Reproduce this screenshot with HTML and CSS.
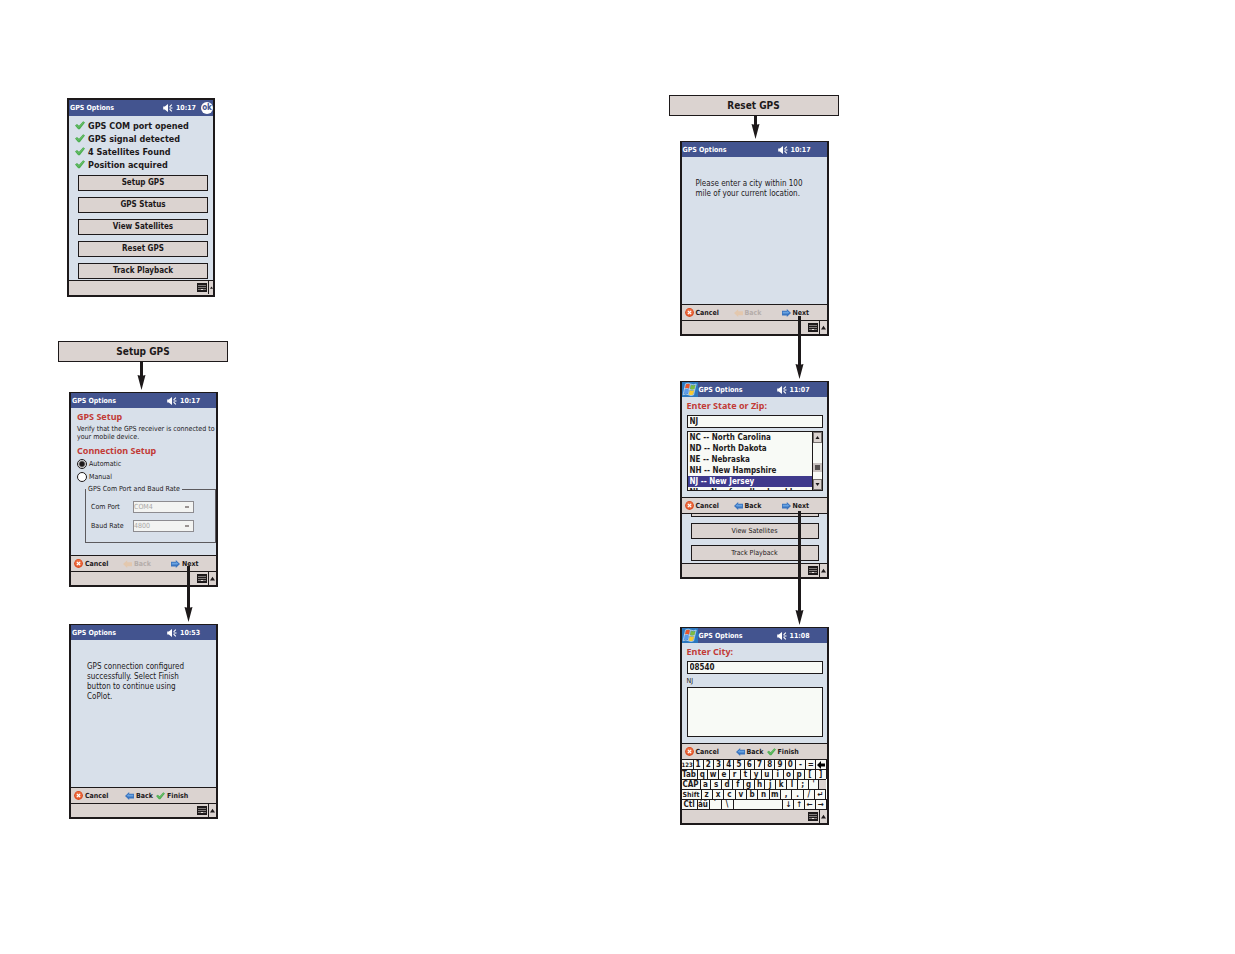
FILE: index.html
```html
<!DOCTYPE html>
<html lang="en">
<head>
    <meta charset="UTF-8">
    <meta name="viewport" content="width=device-width, initial-scale=1.0">
    <title>GPS Options</title>
    <link rel="stylesheet" href="styles.css">
</head>
<body>
    <!-- shared icons -->
    <svg class="sprite" aria-hidden="true">
        <symbol id="check" viewBox="0 0 10 9">
            <path d="M0 4.6 L2 3 L4 4.8 L8.2 0.2 L10 1.6 L4.8 8.2 L3.2 8.2 Z" fill="#4cae50"/>
            <path d="M1.4 4.4 L4 6.4 L8.6 1.4" fill="none" stroke="#6cc06c" stroke-width="1"/>
        </symbol>
        <symbol id="speaker" viewBox="0 0 12 10">
            <path d="M0 3 H2 L6 0 V10 L2 7 H0 Z" fill="#fff"/>
            <path d="M8 3.6 L10.8 0.8 M8 5 H11.6 M8 6.4 L10.8 9.2" fill="none" stroke="#fff" stroke-width="1.4"/>
        </symbol>
        <symbol id="cancel" viewBox="0 0 10 10">
            <circle cx="5" cy="5" r="4.9" fill="#d9481f"/>
            <circle cx="5" cy="4.6" r="3.8" fill="#ec6a3c"/>
            <path d="M3.2 3.2 L6.8 6.8 M6.8 3.2 L3.2 6.8" stroke="#fff" stroke-width="1.5"/>
        </symbol>
        <symbol id="arrow-left" viewBox="0 0 9 8">
            <path d="M0 4 L4.2 0 V1.8 H9 V6.4 H4.2 V8 Z" fill="#3a74bf"/>
            <path d="M1.6 3.8 L4 2 V2.8 H8.2 V4.6 H3 Z" fill="#69a3e2"/>
        </symbol>
        <symbol id="arrow-right" viewBox="0 0 9 8">
            <path d="M9 4 L4.8 0 V1.8 H0 V6.4 H4.8 V8 Z" fill="#3a74bf"/>
            <path d="M7.4 3.8 L5 2 V2.8 H0.8 V4.6 H6 Z" fill="#69a3e2"/>
        </symbol>
        <symbol id="arrow-off" viewBox="0 0 9 8">
            <path d="M0 4 L4.2 0.3 V2.2 H9 V6.2 H4.2 V8 Z" fill="#e3c8ae"/>
        </symbol>
        <symbol id="keyboard" viewBox="0 0 10 9">
            <rect x="0" y="0" width="10" height="9" fill="#1d191a"/>
            <path d="M1.5 2.5 H8.5 M1.5 4.5 H8.5" stroke="#e4dedb" stroke-width="1" stroke-dasharray="1 1"/>
            <path d="M1.5 6.5 H8.5" stroke="#e4dedb" stroke-width="1" stroke-dasharray="1 1 3 1"/>
        </symbol>
        <symbol id="up" viewBox="0 0 4 3"><path d="M0 3 L2 0 L4 3 Z" fill="#1d191a"/></symbol>
        <symbol id="down" viewBox="0 0 4 3"><path d="M0 0 L2 3 L4 0 Z" fill="#1d191a"/></symbol>
        <symbol id="windows" viewBox="0 0 16 16">
            <path d="M3.6 2.6 Q6 1.2 8 2.6 L7 7 Q5 5.8 2.4 7 Z" fill="#e8552b"/>
            <path d="M9 3 Q11.4 4.4 14 3 L12.8 7.6 Q10.4 8.8 8 7.4 Z" fill="#7dbb42"/>
            <path d="M2.2 8 Q4.8 6.8 6.8 8 L5.8 12.6 Q3.6 11.4 1 12.8 Z" fill="#5c9bea"/>
            <path d="M7.8 8.6 Q10.2 9.8 12.6 8.6 L11.4 13.2 Q9 14.6 6.6 13.2 Z" fill="#f7c92f"/>
            <path d="M3.2 2 Q6.2 0.4 8.6 2.2 Q11.4 3.6 14.6 2.2 L11.8 13.8 Q9 15.2 6.2 13.6 Q3.6 12 0.6 13.6 Z M1.8 7.4 Q5 6 7.4 7.8 Q10.2 9.2 13 8 M8.4 2.4 L6.2 13.4" fill="none" stroke="#fff" stroke-width="0.6"/>
        </symbol>
        <symbol id="flow-arrow" viewBox="0 0 9 16">
            <path d="M0.5 1 Q4.5 2.4 8.5 1 L4.5 16 Z" fill="#1d191a"/>
        </symbol>
    </svg>

    <main class="page">
        <section class="column">
            <div class="phone phone-status">
                <header class="titlebar">
                    <h2>GPS Options</h2>
                    <svg class="speaker"><use href="#speaker"/></svg>
                    <time>10:17</time>
                    <button class="ok">ok</button>
                </header>
                <ul class="status">
                    <li><svg><use href="#check"/></svg>GPS COM port opened</li>
                    <li><svg><use href="#check"/></svg>GPS signal detected</li>
                    <li><svg><use href="#check"/></svg>4 Satellites Found</li>
                    <li><svg><use href="#check"/></svg>Position acquired</li>
                </ul>
                <nav class="options">
                    <button>Setup GPS</button>
                    <button>GPS Status</button>
                    <button>View Satellites</button>
                    <button>Reset GPS</button>
                    <button>Track Playback</button>
                </nav>
                <footer class="tray">
                    <svg class="keys"><use href="#keyboard"/></svg>
                    <svg class="up"><use href="#up"/></svg>
                </footer>
            </div>

            <button class="banner banner-setup">Setup GPS</button>
            <div class="flow flow-setup"><svg><use href="#flow-arrow"/></svg></div>

            <div class="phone">
                <header class="titlebar">
                    <h2>GPS Options</h2>
                    <svg class="speaker"><use href="#speaker"/></svg>
                    <time>10:17</time>
                </header>
                <form class="setup">
                    <h3>GPS Setup</h3>
                    <p>Verify that the GPS receiver is connected to your mobile device.</p>
                    <h3>Connection Setup</h3>
                    <label class="radio"><input type="radio" name="mode" checked>Automatic</label>
                    <label class="radio"><input type="radio" name="mode">Manual</label>
                    <fieldset>
                        <legend>GPS Com Port and Baud Rate</legend>
                        <label for="port">Com Port</label>
                        <select id="port" disabled><option>COM4</option></select>
                        <label for="baud">Baud Rate</label>
                        <select id="baud" disabled><option>4800</option></select>
                    </fieldset>
                </form>
                <div class="commands">
                    <button><svg class="round"><use href="#cancel"/></svg>Cancel</button>
                    <button disabled><svg><use href="#arrow-off"/></svg>Back</button>
                    <button><svg><use href="#arrow-right"/></svg>Next</button>
                </div>
                <footer class="tray">
                    <svg class="keys"><use href="#keyboard"/></svg>
                    <svg class="up"><use href="#up"/></svg>
                </footer>
            </div>
            <div class="flow flow-next"><svg><use href="#flow-arrow"/></svg></div>

            <div class="phone">
                <header class="titlebar">
                    <h2>GPS Options</h2>
                    <svg class="speaker"><use href="#speaker"/></svg>
                    <time>10:53</time>
                </header>
                <p class="message message-done">GPS connection configured successfully. Select Finish button to continue using CoPlot.</p>
                <div class="commands commands-finish">
                    <button><svg class="round"><use href="#cancel"/></svg>Cancel</button>
                    <button><svg><use href="#arrow-left"/></svg>Back</button>
                    <button><svg><use href="#check"/></svg>Finish</button>
                </div>
                <footer class="tray">
                    <svg class="keys"><use href="#keyboard"/></svg>
                    <svg class="up"><use href="#up"/></svg>
                </footer>
            </div>
        </section>

        <section class="column column-reset">
            <button class="banner">Reset GPS</button>
            <div class="flow flow-reset"><svg><use href="#flow-arrow"/></svg></div>

            <div class="phone">
                <header class="titlebar">
                    <h2>GPS Options</h2>
                    <svg class="speaker"><use href="#speaker"/></svg>
                    <time>10:17</time>
                </header>
                <p class="message">Please enter a city within 100 mile of your current location.</p>
                <div class="commands">
                    <button><svg class="round"><use href="#cancel"/></svg>Cancel</button>
                    <button disabled><svg><use href="#arrow-off"/></svg>Back</button>
                    <button><svg><use href="#arrow-right"/></svg>Next</button>
                </div>
                <footer class="tray">
                    <svg class="keys"><use href="#keyboard"/></svg>
                    <svg class="up"><use href="#up"/></svg>
                </footer>
            </div>
            <div class="flow flow-state"><svg><use href="#flow-arrow"/></svg></div>

            <div class="phone">
                <header class="titlebar titlebar-start">
                    <svg class="start"><use href="#windows"/></svg>
                    <h2>GPS Options</h2>
                    <svg class="speaker"><use href="#speaker"/></svg>
                    <time>11:07</time>
                </header>
                <form class="search">
                    <label class="heading" for="state">Enter State or Zip:</label>
                    <input id="state" type="text" value="NJ">
                    <div class="listbox">
                        <ul aria-label="States">
                            <li>NC -- North Carolina</li>
                            <li>ND -- North Dakota</li>
                            <li>NE -- Nebraska</li>
                            <li>NH -- New Hampshire</li>
                            <li class="selected">NJ -- New Jersey</li>
                            <li>NL -- Newfoundland and L</li>
                        </ul>
                        <div class="scrollbar">
                            <button type="button" aria-label="Scroll up"><svg><use href="#up"/></svg></button>
                            <span class="thumb"></span>
                            <button type="button" aria-label="Scroll down"><svg><use href="#down"/></svg></button>
                        </div>
                    </div>
                </form>
                <div class="commands">
                    <button><svg class="round"><use href="#cancel"/></svg>Cancel</button>
                    <button><svg><use href="#arrow-left"/></svg>Back</button>
                    <button><svg><use href="#arrow-right"/></svg>Next</button>
                </div>
                <nav class="options options-behind">
                    <span class="covered"></span>
                    <button>View Satellites</button>
                    <button>Track Playback</button>
                </nav>
                <footer class="tray">
                    <svg class="keys"><use href="#keyboard"/></svg>
                    <svg class="up"><use href="#up"/></svg>
                </footer>
            </div>
            <div class="flow flow-city"><svg><use href="#flow-arrow"/></svg></div>

            <div class="phone">
                <header class="titlebar titlebar-start">
                    <svg class="start"><use href="#windows"/></svg>
                    <h2>GPS Options</h2>
                    <svg class="speaker"><use href="#speaker"/></svg>
                    <time>11:08</time>
                </header>
                <form class="search">
                    <label class="heading" for="city">Enter City:</label>
                    <input id="city" type="text" value="08540">
                    <label class="region" for="matches">NJ</label>
                    <textarea id="matches"></textarea>
                </form>
                <div class="commands commands-finish">
                    <button><svg class="round"><use href="#cancel"/></svg>Cancel</button>
                    <button><svg><use href="#arrow-left"/></svg>Back</button>
                    <button><svg><use href="#check"/></svg>Finish</button>
                </div>
                <div class="keyboard">
                    <div class="row"><button class="k12 small">123</button><button>1</button><button>2</button><button>3</button><button>4</button><button>5</button><button>6</button><button>7</button><button>8</button><button>9</button><button>0</button><button>-</button><button>=</button><button aria-label="Backspace"><svg><path d="M0 4 L4 0 V2.5 H8 V5.5 H4 V8 Z"/></svg></button></div>
                    <div class="row"><button class="k16">Tab</button><button>q</button><button>w</button><button>e</button><button>r</button><button>t</button><button>y</button><button>u</button><button>i</button><button>o</button><button>p</button><button>[</button><button>]</button></div>
                    <div class="row"><button class="k19">CAP</button><button>a</button><button>s</button><button>d</button><button>f</button><button>g</button><button>h</button><button>j</button><button>k</button><button>l</button><button>;</button><button>'</button><span class="blank"></span></div>
                    <div class="row"><button class="k20">Shift</button><button>z</button><button>x</button><button>c</button><button>v</button><button>b</button><button>n</button><button>m</button><button>,</button><button>.</button><button>/</button><button>↵</button></div>
                    <div class="row"><button class="k16">Ctl</button><button class="k12">áü</button><button class="k12">`</button><button class="k12">\</button><button class="space" aria-label="Space"></button><button>↓</button><button>↑</button><button>←</button><button>→</button></div>
                </div>
                <footer class="tray">
                    <svg class="keys"><use href="#keyboard"/></svg>
                    <svg class="up"><use href="#up"/></svg>
                </footer>
            </div>
        </section>
    </main>
</body>
</html>
```
FILE: styles.css
```css
* {
    box-sizing: border-box;
}
body {
    margin: 0;
    background: white;
    color: #1d191a;
    font-family: "DejaVu Sans Condensed", "DejaVu Sans", sans-serif;
    font-size: 8px;
    line-height: 10px;
}
h2, h3, p, ul {
    margin: 0;
    padding: 0;
    list-style: none;
}
button, input, select, textarea {
    margin: 0;
    padding: 0;
    border: 0;
    border-radius: 0;
    background: none;
    color: inherit;
    font: inherit;
}
svg {
    display: block;
    flex: none;
}
.sprite {
    position: absolute;
    width: 0;
    height: 0;
}
.page {
    display: grid;
    grid-template-columns: 1fr 1fr;
}
.column {
    display: flex;
    flex-direction: column;
    align-items: flex-start;
    padding: 98px 0 0 58px;
}
.column-reset {
    padding: 95px 0 0 51px;
}

/* device screens */
.phone {
    display: flex;
    flex-direction: column;
    width: 149px;
    min-height: 195px;
    margin-left: 11px;
    border: solid #1d191a;
    border-width: 1px 2px 2px;
    background: #d8e0ea;
    overflow: hidden;
}
.phone-status {
    width: 148px;
    min-height: 199px;
    margin-left: 9px;
    border-top-width: 2px;
}
.titlebar {
    display: flex;
    align-items: center;
    height: 15px;
    padding-left: 1px;
    background: #43548f;
    color: white;
    font-size: 7px;
    font-weight: bold;
}
.phone-status .titlebar {
    height: 16px;
}
.titlebar h2 {
    width: 95px;
    font-size: 7px;
}
.titlebar-start {
    padding-left: 0;
}
.titlebar-start h2 {
    width: 78px;
    margin-left: 1px;
}
.start {
    width: 16px;
    height: 15px;
    background: #2b78c0;
}
.speaker {
    width: 10px;
    height: 8px;
    margin-right: 3px;
}
.ok {
    flex: none;
    width: 12px;
    height: 12px;
    margin-left: 5px;
    border-radius: 50%;
    background: white;
    color: #43548f;
    font-size: 8px;
    line-height: 10px;
}
.tray {
    display: flex;
    justify-content: flex-end;
    height: 14px;
    border-top: 1px solid #1d191a;
    background: #dbd3d0;
}
.tray .keys {
    width: 10px;
    height: 9px;
    margin: 2px 1px 0 0;
}
.tray .up {
    width: 8px;
    height: 13px;
    padding: 0 1px;
    border-left: 1px solid #1d191a;
}
.phone-status .tray {
    height: 15px;
}
.phone-status .up {
    width: 5px;
    padding-right: 0;
}

/* status list and option buttons */
.status {
    padding: 3px 0 0 6px;
    font-size: 9px;
    font-weight: bold;
}
.status li {
    display: flex;
    align-items: center;
    gap: 3px;
    height: 13px;
    white-space: nowrap;
}
.status svg {
    width: 10px;
    height: 9px;
}
.options {
    display: flex;
    flex: 1;
    flex-direction: column;
    gap: 6px;
    padding: 4px 5px 0 9px;
}
.options button {
    height: 16px;
    border: 1px solid #1d191a;
    background: #dbd3d0;
    font-weight: bold;
}
.options-behind {
    padding: 0 8px 2px 9px;
    border-top: 1px solid #1d191a;
}
.options-behind button {
    font-size: 7px;
    font-weight: normal;
}
.covered {
    height: 3px;
    border: solid #1d191a;
    border-width: 0 1px 1px;
    background: #dbd3d0;
}

/* flow chart labels and arrows */
.banner {
    width: 170px;
    height: 21px;
    border: 1px solid #1d191a;
    background: #dbd3d0;
    font-size: 10px;
    font-weight: bold;
}
.banner-setup {
    margin-top: 44px;
}
.flow {
    position: relative;
    z-index: 1;
    width: 9px;
    background: linear-gradient(#1d191a, #1d191a) center top / 3px calc(100% - 12px) no-repeat;
}
.flow svg {
    position: absolute;
    bottom: 0;
    width: 9px;
    height: 16px;
}
.flow-setup {
    height: 28px;
    margin: 0 0 2px 79px;
}
.flow-next {
    height: 56px;
    margin: -21px 0 2px 126px;
}
.flow-reset {
    height: 23px;
    margin: 0 0 2px 82px;
}
.flow-state {
    height: 63px;
    margin: -20px 0 2px 126px;
}
.flow-city {
    height: 114px;
    margin: -68px 0 2px 126px;
}

/* bottom commands */
.commands {
    display: grid;
    grid-template-columns: 49px 48px 1fr;
    height: 16px;
    padding-left: 3px;
    border-top: 1px solid #1d191a;
    background: #dbd3d0;
}
.commands-finish {
    grid-template-columns: 51px 31px 1fr;
}
.commands button {
    display: flex;
    align-items: center;
    gap: 2px;
    font-size: 7px;
    font-weight: bold;
}
.commands button:disabled {
    color: #b5adaa;
}
.commands svg {
    width: 9px;
    height: 8px;
}
.commands .round {
    width: 9px;
    height: 9px;
}

/* gps setup form */
.setup {
    flex: 1;
    padding: 3px 0 0 6px;
    font-size: 7px;
    line-height: 8px;
}
.setup h3, .heading {
    color: #c23b36;
    font-family: "Noto Sans", sans-serif;
    font-size: 9px;
    font-weight: bold;
    line-height: 12px;
}
.setup p {
    margin: 2px 0 4px;
}
.radio {
    display: flex;
    align-items: center;
    gap: 2px;
    height: 13px;
}
.radio input {
    appearance: none;
    width: 10px;
    height: 10px;
    border: 1px solid #1d191a;
    border-radius: 50%;
    background: white;
}
.radio input:checked {
    background: radial-gradient(#1d191a 2px, white 4px);
}
fieldset {
    display: grid;
    grid-template-columns: 42px 61px;
    align-items: center;
    row-gap: 7px;
    margin: 2px 0 0 8px;
    padding: 8px 0 10px 5px;
    border: 1px solid #5c5a5e;
}
legend {
    margin-left: -5px;
    padding: 0 2px;
}
select {
    appearance: none;
    height: 12px;
    border: 1px solid #8d8c90;
    background: linear-gradient(#9a9492, #9a9492) right 4px center / 4px 2px no-repeat #f3f4f2;
}
select:disabled {
    color: #aaa8a6;
    opacity: 1;
}

/* messages */
.message {
    flex: 1;
    padding: 22px 18px 0 14px;
}
.message-done {
    padding-left: 16px;
}

/* state and city forms */
.search {
    display: flex;
    flex: 1;
    flex-direction: column;
    padding: 3px 4px 6px 5px;
}
.search input {
    height: 13px;
    margin-top: 3px;
    padding-left: 2px;
    border: 1px solid #1d191a;
    background: #f8faf6;
    font-weight: bold;
}
.region {
    margin: 2px 0 1px;
    font-size: 7px;
}
.search textarea {
    height: 50px;
    border: 1px solid #1d191a;
    background: #f8faf6;
    resize: none;
}
.listbox {
    display: flex;
    height: 60px;
    margin-top: 3px;
    border: 1px solid #1d191a;
    background: #f8faf6;
}
.listbox ul {
    flex: 1;
    overflow: hidden;
    font-weight: bold;
    line-height: 11px;
    white-space: nowrap;
}
.listbox li {
    padding-left: 2px;
}
.listbox .selected {
    background: #3f3a8c;
    color: white;
}
.scrollbar {
    display: flex;
    flex-direction: column;
    justify-content: space-between;
    width: 10px;
    border-left: 1px solid #1d191a;
}
.scrollbar button {
    display: grid;
    place-items: center;
    height: 11px;
    border: 1px solid #77716f;
    background: #dbd3d0;
}
.scrollbar svg {
    width: 5px;
    height: 3px;
}
.thumb {
    height: 9px;
    margin-top: 12px;
    border: 2px solid #c9c2c0;
    background: #55504f;
}

/* on-screen keyboard */
.keyboard {
    background: #f8faf6;
    font-weight: bold;
}
.keyboard .row {
    display: flex;
    height: 10px;
}
.keyboard button {
    display: grid;
    place-items: center;
    flex: 1;
    min-width: 0;
    border: solid #1d191a;
    border-width: 1px 1px 0 0;
    line-height: 8px;
    white-space: nowrap;
}
.keyboard svg {
    width: 8px;
    height: 8px;
}
.keyboard .k12 {
    flex: 0 0 12px;
}
.keyboard .k16 {
    flex: 0 0 16px;
}
.keyboard .k19 {
    flex: 0 0 19px;
}
.keyboard .k20 {
    flex: 0 0 20px;
    font-size: 7px;
}
.keyboard .small {
    font-size: 6px;
}
.keyboard .space {
    flex: 5;
}
.blank {
    width: 7px;
    border-top: 1px solid #1d191a;
    background: #dbd3d0;
}
```
